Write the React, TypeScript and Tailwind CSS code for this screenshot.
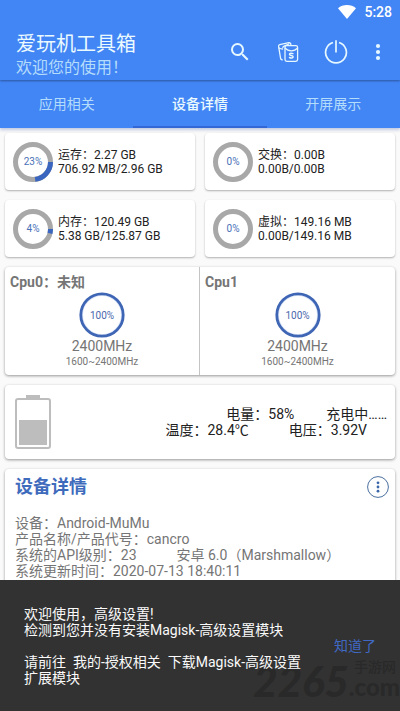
import { useState } from "react";

interface UsageStat {
  label: string;
  total: string;
  detail: string;
  percent: number;
}

const stats: UsageStat[] = [
  { label: "运存", total: "2.27 GB", detail: "706.92 MB/2.96 GB", percent: 23 },
  { label: "交换", total: "0.00B", detail: "0.00B/0.00B", percent: 0 },
  { label: "内存", total: "120.49 GB", detail: "5.38 GB/125.87 GB", percent: 4 },
  { label: "虚拟", total: "149.16 MB", detail: "0.00B/149.16 MB", percent: 0 },
];

const cores = [
  { name: "Cpu0：未知", freq: "2400MHz", range: "1600~2400MHz", load: 100 },
  { name: "Cpu1", freq: "2400MHz", range: "1600~2400MHz", load: 100 },
];

const tabs = ["应用相关", "设备详情", "开屏展示"];

function UsageRing({ percent }: { percent: number }) {
  return (
    <div className="relative h-10 w-10 shrink-0">
      <svg className="h-10 w-10" viewBox="0 0 40 40" fill="none" strokeWidth="5">
        <circle cx="20" cy="20" r="17.5" stroke="#a8a8a8" />
        {percent > 0 && (
          <circle cx="20" cy="20" r="17.5" stroke="#3a66c0" pathLength={100} strokeDasharray={`${percent} 100`} />
        )}
      </svg>
      <span className="absolute inset-0 flex items-center justify-center text-[10px] text-[#4a72b8]">{percent}%</span>
    </div>
  );
}

function LoadRing({ load }: { load: number }) {
  return (
    <div className="relative h-[46px] w-[46px]">
      <svg className="h-full w-full" viewBox="0 0 46 46" fill="none">
        <circle cx="23" cy="23" r="20" stroke="#dbe5f8" strokeWidth="2" />
        <circle cx="23" cy="23" r="21.2" stroke="#3f66b5" strokeWidth="2.8" />
      </svg>
      <span className="absolute inset-0 flex items-center justify-center text-[10px] text-[#4a68ac]">{load}%</span>
    </div>
  );
}

function Header() {
  return (
    <header className="relative z-10 bg-[#4285f4] text-white shadow-[0_1px_2px_rgba(0,0,0,0.35)]">
      <div className="flex h-6 items-center justify-end gap-2 pr-2">
        <svg className="h-[14px] w-[18px]" viewBox="0 0 18 14" fill="currentColor">
          <path d="M9 14 0 3.2C2.4 1.2 5.500 0 9 0s6.600 1.200 9 3.200z" />
        </svg>
        <span className="text-sm font-medium">5:28</span>
      </div>
      <div className="flex h-14 items-center justify-between pr-1 pl-4">
        <div className="pt-2">
          <h1 className="text-xl leading-6 text-[#eafaff]">爱玩机工具箱</h1>
          <p className="text-base leading-6 text-[#b4dcfb]">欢迎您的使用！</p>
        </div>
        <div className="flex items-center text-[#e6f8ff]">
          <button aria-label="搜索" className="flex h-12 w-12 items-center justify-center">
            <svg className="h-6 w-6" viewBox="0 0 24 24" fill="currentColor">
              <path d="M15.500 14h-.79l-.28-.27A6.471 6.471 0 0 0 16 9.500 6.500 6.500 0 1 0 9.500 16c1.610 0 3.090-.59 4.230-1.570l.27.28v.79l5 4.990L20.490 19zm-6 0C7.010 14 5 11.990 5 9.500S7.010 5 9.500 5 14 7.010 14 9.500 11.990 14 9.500 14" />
            </svg>
          </button>
          <button aria-label="红包" className="flex h-12 w-12 items-center justify-center">
            <svg className="h-6 w-6" viewBox="0 0 24 24" fill="none" stroke="currentColor" strokeWidth="1.300" strokeLinejoin="round" strokeLinecap="round">
              <path d="M6.300 19.800c-1 .1-1.500-.4-1.700-1.300L2.600 6.400c-.1-1 .3-1.600 1.200-1.800l9-1.900c.9-.2 1.600.2 1.900 1.100l.2.700" />
              <path d="M3 8c1.200.7 2.300 1 3.600 1M6.800 7.200C8.600 5.300 11 5.300 13 3.800" />
              <rect x="9" y="5.600" width="12.600" height="15.800" rx="1.800" />
              <path d="M9.200 8.200c1.600 1.900 3.700 2.700 6.100 2.700s4.500-.8 6.100-2.700" />
              <path strokeWidth="1.500" d="M16.900 13.600c-2.400-.7-3.400-.2-3.400.7 0 1.600 3.600.7 3.600 2.500 0 1.200-1.700 1.500-3.600.7" />
            </svg>
          </button>
          <button aria-label="电源" className="flex h-12 w-12 items-center justify-center">
            <svg className="h-6 w-6" viewBox="0 0 24 24" fill="none" stroke="currentColor" strokeWidth="1.700">
              <path d="M9 2.500a10.400 10.400 0 1 0 6 0M12 .3v12.200" />
            </svg>
          </button>
          <button aria-label="更多" className="flex h-12 w-9 items-center justify-center">
            <svg className="h-6 w-6" viewBox="0 0 24 24" fill="currentColor">
              <circle cx="12" cy="6" r="2.100" />
              <circle cx="12" cy="12" r="2.100" />
              <circle cx="12" cy="18" r="2.100" />
            </svg>
          </button>
        </div>
      </div>
    </header>
  );
}

export default function App() {
  const [active, setActive] = useState(1);
  const [showTip, setShowTip] = useState(true);

  return (
    <div className="flex h-dvh flex-col overflow-hidden bg-[#fafafa] font-[Roboto,'Noto_Sans_CJK_SC',sans-serif] text-[#212121]">
      <Header />
      <nav className="flex h-12 shrink-0 bg-[#4285f4] shadow-[0_2px_3px_rgba(66,90,170,0.3)]">
        {tabs.map((tab, i) => (
          <button
            key={tab}
            onClick={() => setActive(i)}
            className={
              i === active
                ? "flex-1 border-b-2 border-[#3367d6] pt-[2px] text-sm font-medium text-[#eafaff]"
                : "flex-1 border-b-2 border-transparent pt-[2px] text-sm text-[#b4dcfb]"
            }
          >
            {tab}
          </button>
        ))}
      </nav>

      <main className="flex min-h-0 flex-1 flex-col gap-[10px] px-[5px] pt-[5px]">
        <div className="grid shrink-0 grid-cols-2 gap-[10px]">
          {stats.map((s) => (
            <section key={s.label} className="flex h-[57px] items-center gap-[5px] rounded bg-white px-2 shadow-[0_1px_2px_rgba(0,0,0,0.3)]">
              <UsageRing percent={s.percent} />
              <div className="text-xs leading-[14px]">
                <p>
                  {s.label}：{s.total}
                </p>
                <p>{s.detail}</p>
              </div>
            </section>
          ))}
        </div>

        <section className="grid shrink-0 grid-cols-2 rounded bg-white text-[#757575] shadow-[0_1px_3px_rgba(0,0,0,0.4)]">
          {cores.map((c) => (
            <div key={c.name} className="flex flex-col items-center border-r border-[#c4c4c4] pb-[5px] last:border-r-0">
              <h2 className="w-full px-[5px] pt-[5px] text-sm leading-5 font-bold">{c.name}</h2>
              <LoadRing load={c.load} />
              <p className="text-sm leading-4">{c.freq}</p>
              <p className="text-[10px] leading-4">{c.range}</p>
            </div>
          ))}
        </section>

        <section className="flex h-[74px] shrink-0 items-center justify-between rounded bg-white pr-2 pl-[10px] shadow-[0_1px_3px_rgba(0,0,0,0.4)]">
          <svg className="h-[54px] w-9" viewBox="0 0 36 54" fill="none">
            <rect x="11" y="0" width="14" height="5" fill="#bdbdbd" />
            <rect x="1" y="4" width="34" height="49" rx="2" stroke="#bdbdbd" strokeWidth="2" fill="#fff" />
            <rect x="4" y="25" width="28" height="25" fill="#bdbdbd" />
          </svg>
          <div className="text-sm leading-4">
            <p className="flex justify-end gap-8">
              <span>电量：58%</span>
              <span>充电中……</span>
            </p>
            <p className="flex justify-end gap-10 pr-5">
              <span>温度：28.4℃</span>
              <span>电压：3.92V</span>
            </p>
          </div>
        </section>

        <section className="min-h-0 flex-1 rounded-t bg-white pl-[10px] shadow-[0_1px_3px_rgba(0,0,0,0.4)]">
          <div className="flex h-9 items-center justify-between pr-[6px]">
            <h2 className="text-lg font-bold text-[#3f6bbd]">设备详情</h2>
            <button aria-label="更多详情" className="text-[#4a6f9f]">
              <svg className="h-[22px] w-[22px]" viewBox="0 0 22 22" fill="none">
                <circle cx="11" cy="11" r="10.400" stroke="currentColor" strokeWidth="1" />
                <circle cx="11" cy="6.800" r="1.400" fill="#3a66a8" />
                <circle cx="11" cy="11" r="1.400" fill="#3a66a8" />
                <circle cx="11" cy="15.200" r="1.400" fill="#3a66a8" />
              </svg>
            </button>
          </div>
          <div className="pt-[10px] text-sm leading-4 text-[#757575]">
            <p>设备：Android-MuMu</p>
            <p>产品名称/产品代号：cancro</p>
            <p className="flex gap-10">
              <span>系统的API级别：23</span>
              <span>安卓 6.0（Marshmallow）</span>
            </p>
            <p>系统更新时间：2020-07-13 18:40:11</p>
          </div>
        </section>
      </main>

      {showTip && (
        <div role="status" className="fixed inset-x-0 bottom-0 z-20 flex items-center justify-between bg-[#323232] pt-[26px] pr-6 pb-[25px] pl-6 text-sm leading-4 text-[#fafafa]">
          <div aria-hidden="true" className="absolute right-0 bottom-3 flex items-end text-[#292929]">
            <span className="font-[Lato,sans-serif] text-[42px] leading-9 font-black italic">2265</span>
            <span className="flex flex-col items-end">
              <span className="pr-1 text-sm leading-4 font-medium">手游网</span>
              <span className="font-[Lato,sans-serif] text-2xl leading-6 font-black">.com</span>
            </span>
          </div>
          <p className="relative w-72 whitespace-pre-wrap">
            {"欢迎使用，高级设置!\n检测到您并没有安装Magisk-高级设置模块\n\n请前往  我的-授权相关  下载Magisk-高级设置扩展模块"}
          </p>
          <button onClick={() => setShowTip(false)} className="relative shrink-0 text-[#4069c4]">
            知道了
          </button>
        </div>
      )}
    </div>
  );
}
